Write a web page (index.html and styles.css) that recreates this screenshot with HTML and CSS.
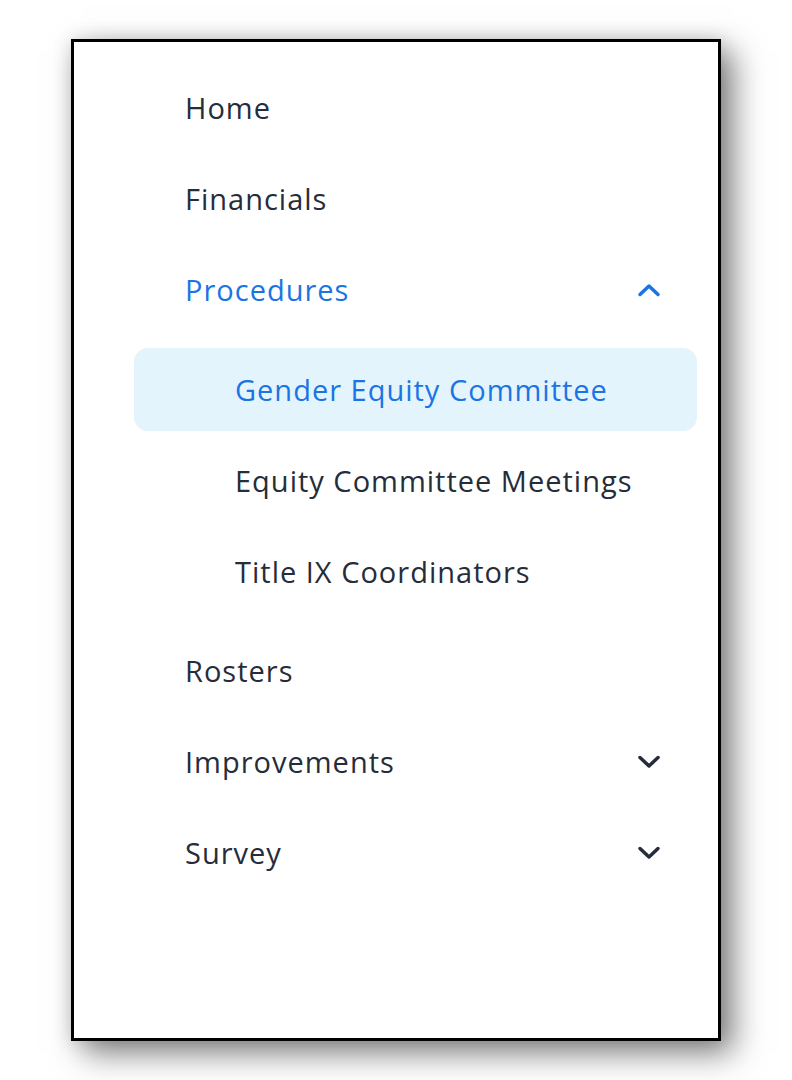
FILE: index.html
```html
<!DOCTYPE html>
<html lang="en">
<head>
    <meta charset="UTF-8">
    <meta name="viewport" content="width=device-width, initial-scale=1.0">
    <title>Side Menu</title>
    <link rel="stylesheet" href="styles.css">
</head>
<body>
    <nav class="sidebar">
        <ul class="menu">
            <li class="menu-item">Home</li>
            <li class="menu-item">Financials</li>
            <li class="menu-item open">
                <span>Procedures</span>
                <svg class="chevron" viewBox="0 0 24 14" width="24" height="14">
                    <path d="M3 11.5 L12 3 L21 11.5" />
                </svg>
            </li>
            <li>
                <ul class="submenu">
                    <li class="sub-item active">Gender Equity Committee</li>
                    <li class="sub-item">Equity Committee Meetings</li>
                    <li class="sub-item">Title IX Coordinators</li>
                </ul>
            </li>
            <li class="menu-item">Rosters</li>
            <li class="menu-item">
                <span>Improvements</span>
                <svg class="chevron" viewBox="0 0 24 14" width="24" height="14">
                    <path d="M3 2.5 L12 11 L21 2.5" />
                </svg>
            </li>
            <li class="menu-item">
                <span>Survey</span>
                <svg class="chevron" viewBox="0 0 24 14" width="24" height="14">
                    <path d="M3 2.5 L12 11 L21 2.5" />
                </svg>
            </li>
        </ul>
    </nav>
</body>
</html>
```

FILE: styles.css
```css
html,
body {
    height: 100%;
}
body {
    margin: 0;
    padding: 39px 0 0 71px;
    box-sizing: border-box;
    background-color: #fff;
    font-family: 'Open Sans', 'Liberation Sans', sans-serif;
    color: #262d3a;
}
.sidebar {
    width: 644px;
    height: 996px;
    border: 3px solid #000;
    background-color: #fff;
    box-shadow: 12px 12px 30px rgba(0, 0, 0, 0.5), 0 0 18px rgba(0, 0, 0, 0.12);
}
.menu {
    list-style: none;
    margin: 0;
    padding: 20px 0 0 0;
}
.menu-item {
    height: 91px;
    display: flex;
    align-items: center;
    justify-content: space-between;
    padding: 0 57px 0 111px;
    font-size: 29px;
    font-weight: 500;
    letter-spacing: 1px;
}
.menu-item.open {
    color: #1b74e4;
}
.chevron {
    fill: none;
    stroke: #262d3a;
    stroke-width: 3.5;
    stroke-linecap: round;
    stroke-linejoin: round;
}
.open .chevron {
    stroke: #1b74e4;
}
.submenu {
    list-style: none;
    margin: 0;
    padding: 13px 21px 12px 60px;
    display: flex;
    flex-direction: column;
    gap: 8px;
}
.sub-item {
    height: 83px;
    display: flex;
    align-items: center;
    padding-left: 101px;
    font-size: 29px;
    font-weight: 500;
    letter-spacing: 1px;
    border-radius: 14px;
}
.sub-item.active {
    background-color: #e3f4fd;
    color: #1b74e4;
}
```
